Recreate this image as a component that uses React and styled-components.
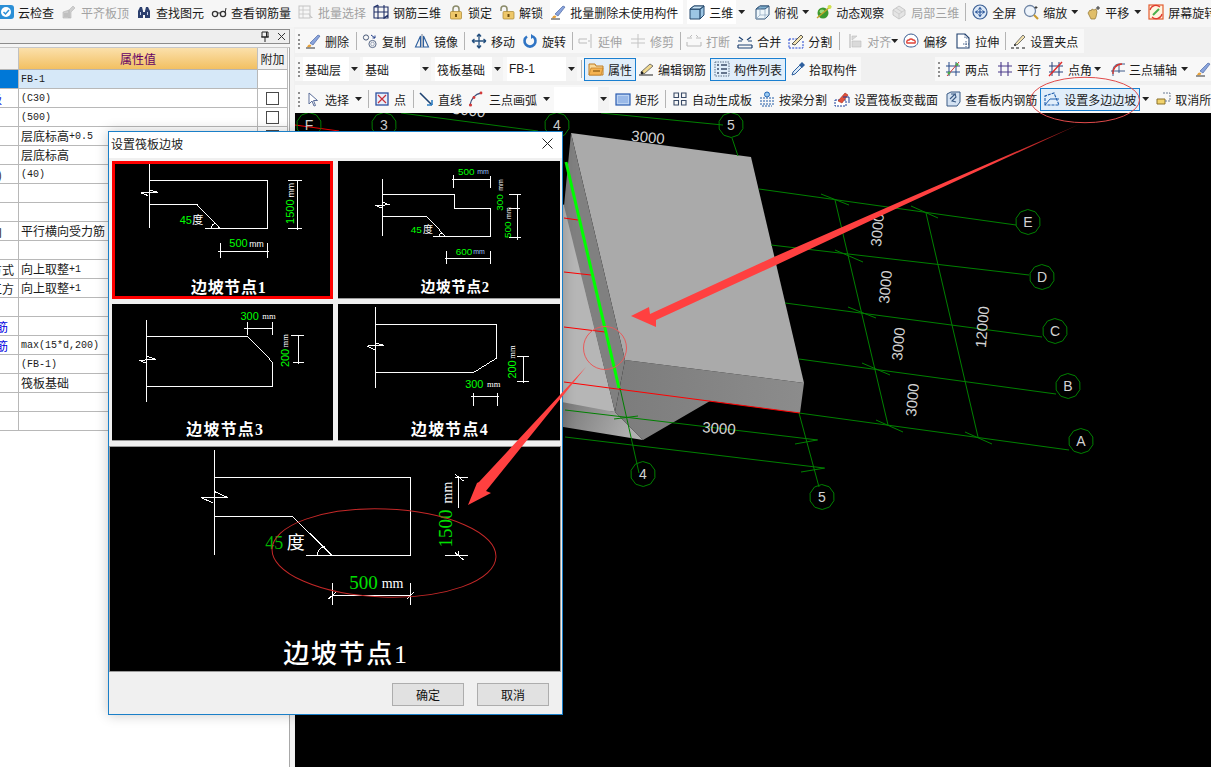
import React from "react";
import styled, { createGlobalStyle } from "styled-components";

const Global = createGlobalStyle`
  html, body { margin: 0; padding: 0; background: #f0f0f0; }
  #root { width: 1211px; height: 767px; overflow: hidden; }
`;
const CJK = `"Noto Sans CJK SC", "Liberation Sans", sans-serif`;
const Page = styled.div`
  position: relative; width: 1211px; height: 767px; overflow: hidden;
  display: flex; flex-direction: column; font-family: ${CJK}; font-size: 12px; color: #1a1a1a; background: #f0f0f0;
`;
const TopBar = styled.div`
  height: 27px; flex: none; display: flex; align-items: center; padding-bottom: 3px; box-sizing: border-box;
  background: #f6f6f6; overflow: hidden; white-space: nowrap;
`;
const Body = styled.div`flex: 1; display: flex; min-height: 0;`;
const Side = styled.div`width: 294px; flex: none; display: flex; flex-direction: column; padding-top: 2px; box-sizing: border-box; background: #f4f4f4;`;
const PanelTitle = styled.div`
  height: 15px; width: 290px; box-sizing: border-box; border: 1px solid #8c8c8c; border-left: 0; background: #eeeeee;
  display: flex; align-items: center; justify-content: flex-end; gap: 7px; padding-right: 3px; margin-bottom: 3px;
`;
const TableWrap = styled.div`flex: 1; width: 290px; box-sizing: border-box; background: #fff; border-right: 1px solid #a8a8a8; border-top: 1px solid #c8c8c8;`;
const Grid = styled.div`display: grid; grid-template-columns: 19px 239px 30px; grid-auto-rows: 19px; width: 288px;`;
const HeadA = styled.div`grid-row: auto; height: 22px; background: #f2f2f2; border-right: 1px solid #c0c0c0; border-bottom: 1px solid #b4b4b4; box-sizing: border-box;`;
const HeadB = styled(HeadA)`
  background: linear-gradient(#fbe0ab, #f2c062); color: #660066; font-size: 12px; display: flex; align-items: center; justify-content: center;
`;
const HeadC = styled(HeadA)`display: flex; align-items: center; justify-content: center; color: #222;`;
const Header = styled.div`display: grid; grid-template-columns: 19px 239px 30px; width: 288px; height: 22px;`;
const Cell = styled.div`
  box-sizing: border-box; border-right: 1px solid #b8b8b8; border-bottom: 1px solid #b8b8b8; display: flex; align-items: center;
  overflow: hidden; white-space: nowrap; background: ${p => p.$bg || "#fff"};
`;
const NameCell = styled(Cell)`justify-content: flex-end; padding-right: ${p => p.$pad}px; color: ${p => p.$blue ? "#0000e0" : "#1a1a1a"};`;
const ValueCell = styled(Cell)`padding-left: 2px; font-family: "Liberation Mono", ${CJK}; font-size: 10px;`;
const ValueCjk = styled.span`font-size: 12px;`;
const MarkCell = styled(Cell)`justify-content: center;`;
const Check = styled.div`width: 13px; height: 13px; box-sizing: border-box; border: 1px solid #4a4a4a; background: #fff;`;
const Right = styled.div`flex: 1; display: flex; flex-direction: column; min-width: 0; padding-top: 2px; margin-left: 1px;`;
const BarRow = styled.div`display: flex; justify-content: space-between; height: 24px; margin-bottom: 4px; flex: none;`;
const Bar = styled.div`
  height: 24px; display: flex; align-items: center; background: #f8f8f8; padding-right: ${p => p.$pr ?? 6}px; white-space: nowrap; overflow: hidden;
  width: ${p => p.$w ? p.$w + "px" : "auto"}; box-sizing: border-box;
`;
const WideBar = styled(Bar)`height: 28px; flex: none; margin-left: 0; width: 916px; padding: 0 0 0 0;`;
const Grip = styled.div`width: 0; height: 15px; margin-left: 3px; margin-right: 2px; border-left: 2px dotted #8e8e8e; flex: none;`;
const Sep = styled.div`width: 1px; height: 18px; background: #b4b4b4; margin-left: ${p => p.$ml}px; flex: none;`;
const ItemBox = styled.div`
  display: flex; align-items: center; flex: none; gap: ${p => p.$gap ?? 4}px; margin-left: ${p => p.$ml ?? 0}px;
  color: ${p => p.$off ? "#a2a2a2" : "#1a1a1a"};
  background: ${p => p.$white ? "#fff" : "transparent"};
  padding: ${p => p.$active ? "0 3px" : `0 ${p.$pr ?? 0}px 0 ${p.$pl ?? 0}px`};
  height: ${p => p.$active ? "23px" : p.$white ? "24px" : "auto"};
  box-sizing: border-box;
  border: ${p => p.$active ? "1px solid #1a7fd0" : "0"};
  ${p => p.$active && "background: #e1eefa;"}
`;
const IconSvg = styled.svg`width: 16px; height: 16px; flex: none; display: block;`;
const Caret = styled.div`
  width: 7px; height: 4px; flex: none; margin-left: ${p => p.$ml ?? 0}px;
  background: #222; clip-path: polygon(0 0, 100% 0, 50% 100%);
`;
const Select = styled.div`
  display: flex; width: ${p => p.$w}px; height: 24px; margin-left: ${p => p.$ml}px; flex: none; align-items: stretch;
`;
const SelectText = styled.div`flex: 1; background: #fff; display: flex; align-items: center; padding-left: 2px; font-family: ${p => p.$latin ? `"Liberation Sans", ${CJK}` : CJK};`;
const SelectBtn = styled.div`width: 11px; background: #f3f3f3; display: flex; align-items: center; justify-content: center;`;
const Canvas = styled.div`flex: 1; background: #000; min-height: 0; overflow: hidden;`;
const CanvasSvg = styled.svg`display: block; width: 917px; height: 654px;`;
const Overlay = styled.svg`position: absolute; left: 0; top: 0; width: 1211px; height: 767px; pointer-events: none; z-index: 5;`;
const Dialog = styled.div`
  position: absolute; left: 108px; top: 131px; width: 455px; height: 584px; box-sizing: border-box; z-index: 3;
  border: 1px solid #1a7fc8; background: #f0f0f0; box-shadow: 0 0 12px rgba(0,0,0,.22); display: flex; flex-direction: column;
`;
const DialogTitle = styled.div`height: 26px; flex: none; background: #fff; display: flex; align-items: center; justify-content: space-between; padding: 0 9px 3px 2px; box-sizing: border-box; color: #222;`;
const Thumbs = styled.div`display: grid; grid-template-columns: 221px 222px; grid-template-rows: 138px 137px; gap: 5px 5px; margin: 3px 0 5px 3px;`;
const Thumb = styled.div`background: #000; box-sizing: border-box; border: ${p => p.$sel ? "3px solid #ff0000" : "0"}; border-bottom: ${p => p.$sel ? "3px solid #ff0000" : "1px solid #999"}; overflow: hidden;`;
const DrawSvg = styled.svg`display: block; width: 100%; height: 100%;`;
const Large = styled.div`width: 452px; height: 226px; flex: none; background: #000; border: 1px solid #9a9a9a; box-sizing: border-box; margin-left: 0;`;
const Footer = styled.div`flex: 1; display: flex; justify-content: flex-end; gap: 13px; padding: 11px 13px 0 0; box-sizing: border-box;`;
const Btn = styled.div`width: 72px; height: 23px; box-sizing: border-box; border: 1px solid #adadad; background: #e1e1e1; display: flex; align-items: center; justify-content: center; color: #111;`;
const Line = styled.path`fill: none; stroke: #fff; stroke-width: 3; shape-rendering: crispEdges;`;
const Num = styled.text`fill: ${p => p.$c || "#00ff00"}; font-family: ${p => p.$serif ? '"Liberation Serif"' : '"Liberation Sans"'}, ${CJK}; font-size: ${p => p.$s || 33}px;`;
const Title = styled.text`fill: #fff; font-family: "Liberation Serif", ${CJK}; font-weight: ${p => p.$w ?? 700}; font-size: ${p => p.$s || 48}px; letter-spacing: ${p => p.$ls ?? 2}px;`;
const Axis = styled.path`fill: none; stroke: #008000; stroke-width: 1;`;
const RedAxis = styled.path`fill: none; stroke: #ff0000; stroke-width: 1;`;
const DimText = styled.text`fill: #d2d2d2; font-family: "Liberation Sans", sans-serif; font-size: 15px;`;
const BubbleText = styled.text`fill: #d2d2d2; font-family: "Liberation Sans", sans-serif; font-size: 14px; text-anchor: middle; dominant-baseline: central;`;
const BubbleShape = styled.polygon`fill: none; stroke: #008000; stroke-width: 1;`;

const st = (c, w = 1.3) => ({ fill: "none", stroke: c, strokeWidth: w });
const brush = <><path d="M2 14c1-3 3-3 4-2s-1 3-4 2z" fill="#e8a33c"/><path d="M5 10l8-8 2 1-7 9z" fill="#8aa4dc" stroke="#3c5a9a" strokeWidth=".6"/><path d="M1 15h9" {...st("#333",1)}/></>;
const I = {
  cloud: <><rect y="1" width="16" height="14" rx="3" fill="#2b8fd6"/><circle cx="8" cy="8" r="5" fill="#fff"/><path d="M5.5 8l2 2 3.5-4" {...st("#2b8fd6",1.5)}/></>,
  flush: <><path d="M2 14V8l6-2v8zM8 14V6l4-4 2 2-4 4v6z" fill="#cfcfcf" stroke="#b5b5b5" strokeWidth=".6"/><path d="M3 10h4M3 12h4" {...st("#aaa",.8)}/></>,
  binoc: <><path d="M2 14V7l2-4h2l1 4v7zM9 14V7l1-4h2l2 4v7z" fill="#2c3f6e"/><path d="M7 8h2v3H7z" fill="#2c3f6e"/><path d="M4 8h1v3H4zM11 8h1v3h-1z" fill="#c7d3ee"/></>,
  glasses: <><circle cx="4" cy="10" r="2.6" {...st("#333",1.3)}/><circle cx="12" cy="10" r="2.6" {...st("#333",1.3)}/><path d="M6 9h4M14 9l1-5" {...st("#333",1)}/></>,
  batch: <><rect x="1" y="2" width="11" height="12" {...st("#c4c4c4",1)}/><path d="M1 6h11M1 10h11M5 2v12" {...st("#c4c4c4",.8)}/><path d="M10 9l5 5-2 0z" fill="#c4c4c4"/></>,
  rebar: <><path d="M1 3h14v11H1zM5 1v14M11 1v14M1 8h14M1 3l4-2M11 14l4-3" {...st("#1f2f66",1.1)}/></>,
  lock: <><path d="M5 8V5a3 3 0 016 0v3" {...st("#8b8b6a",1.5)}/><rect x="2.5" y="7.5" width="11" height="7.5" rx="1" fill="#eec769" stroke="#a8842e" strokeWidth=".7"/><rect x="7" y="10" width="2" height="3" fill="#6b4d10"/></>,
  unlock: <><path d="M2 7V5a3 3 0 016 0v3" {...st("#8b8b6a",1.5)}/><rect x="4" y="7.5" width="11" height="7.5" rx="1" fill="#eec769" stroke="#a8842e" strokeWidth=".7"/><rect x="8.5" y="10" width="2" height="3" fill="#6b4d10"/></>,
  brush,
  cube: <><path d="M1 5l4-3h10v9l-4 4H1z" fill="#9cc6e4" stroke="#264a6e"/><path d="M1 5h10v10M11 5l4-3" {...st("#264a6e")}/><path d="M1 5l4-3h10l-4 3z" fill="#c9e3f4" stroke="#264a6e"/></>,
  top: <><path d="M2 5l4-3h9v9l-4 4H2z" fill="#eef6fb" stroke="#35577a"/><path d="M2 5l4-3h9l-4 3z" fill="#7fb0d0" stroke="#35577a"/><path d="M11 5v10M2 15l4-4h9M6 2v9" {...st("#8aa5bd",.7)}/></>,
  orbit: <><circle cx="7" cy="9" r="5.5" fill="#3d9a2e"/><ellipse cx="6" cy="7.5" rx="2.5" ry="2" fill="#9bdc7d"/><path d="M1 14L15 2" {...st("#c2a32a",1.4)}/><circle cx="13.5" cy="3" r="2" fill="#cfe34a"/></>,
  local: <><path d="M2 6l6-4 6 4v5l-6 4-6-4z" fill="#e4e4e4" stroke="#c8c8c8"/><path d="M2 6l6 4 6-4M8 10v5M5 4l6 4" {...st("#c8c8c8",.8)}/></>,
  full: <><circle cx="8" cy="8" r="7" fill="#dce8f6" stroke="#3c5f94" strokeWidth="1.2"/><path d="M8 3.5v9M3.5 8h9M8 3.5l-1.5 2M8 3.5l1.5 2M8 12.5l-1.5-2M8 12.5l1.5-2M3.5 8l2-1.5M3.5 8l2 1.5M12.5 8l-2-1.5M12.5 8l-2 1.5" {...st("#1d4a92",1)}/></>,
  zoom: <><circle cx="7" cy="7" r="5.5" fill="#eef4fb" stroke="#6f85a4" strokeWidth="1.3"/><path d="M11 11l4 4" {...st("#c99a2e",2.2)}/><path d="M13 2v3M11.5 3.5h3" {...st("#333",.9)}/></>,
  pan: <><path d="M3 9l2-3 1 1 1-2 2 1 2-1 1 3-1 5-1 2H6z" fill="#e0be6a" stroke="#8e7330" strokeWidth=".7"/><path d="M11 4h4M13 2v4" {...st("#333",1)}/></>,
  screen: <><rect x="1" y="1" width="14" height="14" fill="#fff5e0" stroke="#e25a2e" strokeWidth="1.2"/><path d="M5 11l6-6" {...st("#49b04a",2)}/><path d="M2 6a6 6 0 0110-3M14 10a6 6 0 01-10 3" {...st("#e03a2e",1.2)}/></>,
  copy: <><circle cx="4" cy="4.5" r="2.6" {...st("#4a5a78",1)}/><circle cx="10.5" cy="11" r="3.6" {...st("#5a6a88",1)}/><circle cx="10.5" cy="11" r="1.8" {...st("#8a97ad",.8)}/><path d="M9 2l4 3M13 5V2.5M13 5h-2.5" {...st("#24408a",1)}/></>,
  mirror: <><path d="M8 1v14" {...st("#4a5a78",.8)}/><path d="M6.5 3L1.5 14h5zM9.5 3l5 11h-5z" {...st("#2d5f9e",1.1)}/></>,
  move: <><path d="M8 1v14M1 8h14M8 1L6 3.5M8 1l2 2.5M8 15l-2-2.5M8 15l2-2.5M1 8l2.5-2M1 8l2.5 2M15 8l-2.5-2M15 8l-2.5 2" {...st("#25507f",1.3)}/></>,
  rot: <><path d="M5 3.5a5.5 5.5 0 106 0" {...st("#2f74c4",2.6)}/><path d="M9 1l3.5 2.5L9 6z" fill="#2f74c4"/></>,
  extend: <><path d="M1 6h8M1 10h8M1 6v4M13 1v14M10 8h2" {...st("#bcbcbc",1)}/></>,
  trim: <><path d="M1 6h14M1 10h14M8 1v14" {...st("#c4c4c4",1)}/></>,
  brk: <><path d="M1 5h5M10 5h5M1 13h14M1 13V9M15 13V9" {...st("#bcbcbc",1.1)}/><path d="M6 2l-2 2M10 2l2 2" {...st("#bcbcbc",1)}/></>,
  merge: <><path d="M1 12h14M1 15h14M1 12v3M15 12v3M2 4l4 3M14 4l-4 3" {...st("#1e4272",1.2)}/><path d="M1 8h4M11 8h4" {...st("#1e4272",1.2)}/></>,
  split: <><path d="M1 6h11M1 15h14M1 6v9M15 8v7" {...st("#1a3fd0",1)} strokeDasharray="2 1.2"/><path d="M4 11l9-9 2 2-8 8z" fill="#f4e3b0" stroke="#333" strokeWidth=".8"/></>,
  align: <><path d="M3 1v14" {...st("#bdbdbd",1.2)}/><path d="M5 3h5l-5 4zM5 8h9v6H5z" fill="#dadada" stroke="#bdbdbd" strokeWidth=".6"/></>,
  offset: <><path d="M1 8a7 7 0 0114 0c0 4-3 6-7 6s-7-2-7-6z" fill="#fff" stroke="#3a5d92"/><path d="M4 10a2 2 0 012-3 2.5 2.5 0 014 0 2 2 0 012 3z" {...st("#e0443a",1.4)}/></>,
  stretch: <><path d="M2 1h8l4 4v10H2z" fill="#fff" stroke="#20406e" strokeWidth="1.1"/><path d="M10 1v4h4M11 8v6M8 11h6" {...st("#20406e",.8)} strokeDasharray="1.5 1"/></>,
  grip: <><path d="M1 15h3M6 15h3M12 15h3" {...st("#111",1.2)}/><circle cx="5" cy="12" r="1" fill="#111"/><path d="M5 11L13 2l2 2-8 8z" fill="#f4e3b0" stroke="#555" strokeWidth=".8"/></>,
  props: <><path d="M1 3h6l1 2h7v9H1z" fill="#f9d99a" stroke="#c07d22"/><path d="M3 7h12l-2 7H1z" fill="#f5b352" stroke="#c07d22" strokeWidth=".7"/><path d="M5 10h7" {...st("#8a5a10",1.2)}/></>,
  edit: <><path d="M1 14h14" {...st("#333",1.1)}/><path d="M3 11L12 3l3 2-9 8z" fill="#f1d98f" stroke="#555" strokeWidth=".8"/><circle cx="4" cy="12" r="1.4" fill="#222"/></>,
  list: <><rect x="1" y="1" width="14" height="14" {...st("#5f7088",1)} strokeDasharray="1.5 1"/><path d="M3 4h2M3 8h2M3 12h2M7 4h6M7 8h6M7 12h6" {...st("#3c4e6a",1.3)}/></>,
  picker: <><path d="M2 14l1-3 7-7 2 2-7 7z" fill="#dbeaf8" stroke="#2d5f9e"/><path d="M9 4l3-3 3 3-3 3z" fill="#2d5f9e"/></>,
  twop: <><path d="M4 1v14M11 1v14M1 5h14M1 11h14" {...st("#274a8a",1)}/><path d="M2 15L14 1" {...st("#d23a3a",1)}/><circle cx="4" cy="12" r="1.5" fill="#4aa84a"/><circle cx="12" cy="3.5" r="1.5" fill="#4aa84a"/></>,
  para: <><path d="M4 1v14M11 1v14M1 5h14M1 11h14" {...st("#4a3a8a",1.1)}/></>,
  ang: <><path d="M4 1v14M11 1v14M1 5h14M1 11h14" {...st("#27407a",1)}/><path d="M1 15L14 1" {...st("#e02a2a",1.4)}/></>,
  arc3: <><path d="M3 15V9a6 6 0 016-6h6M1 10h14M9 3v9" {...st("#2a4a80",.9)}/><path d="M3 13a9 9 0 019-10" {...st("#d8322a",1.3)}/></>,
  cur: <><path d="M5 2v11l3-3 2 5 1.5-.5-2-5h4z" fill="#fff" stroke="#5c6f9a" strokeWidth="1"/></>,
  pt: <><rect x="2" y="2" width="12" height="12" fill="#e8f0fb" stroke="#2d4f9e" strokeWidth="1.3"/><path d="M4 4l8 8M12 4l-8 8" {...st("#c8303a",1.2)}/></>,
  ln: <><path d="M2 2l12 12" {...st("#1e4272",1.6)}/><path d="M14 14V9M14 14H9" {...st("#2e7fc4",1.6)}/></>,
  arc: <><path d="M2 14C3 8 7 3 13 2" {...st("#3a4f7a",1.3)}/><circle cx="2.5" cy="14" r="1.6" fill="#d23a3a"/><circle cx="6" cy="6.5" r="1.4" fill="#d23a3a"/><circle cx="13" cy="2" r="1.4" fill="#d23a3a"/></>,
  rect: <><rect x="1" y="3" width="14" height="11" fill="#bcd3f2" stroke="#2b5cb0" strokeWidth="1.2"/><rect x="3" y="5" width="10" height="7" fill="#9ab9e8"/></>,
  auto: <><path d="M2 2h4.500v4.500H2zM9.500 2H14v4.500H9.500zM2 9.500h4.500V14H2zM9.500 9.500H14V14H9.500z" {...st("#3a4a66",1.1)}/></>,
  beam: <><circle cx="8" cy="3.500" r="2.500" fill="#9ccaf0" stroke="#2468b8"/><path d="M1 7h14M1 10h14M1 13h14M3 15h10" {...st("#1f5aa6",1.1)} strokeDasharray="2 1"/></>,
  sect: <><path d="M1 9h11v6H1z" fill="#fff" stroke="#1a3f9a" strokeDasharray="2 1"/><path d="M4 10l7-8 3 2-6 8z" fill="#e2503a" stroke="#a82a1a" strokeWidth=".6"/><path d="M9 6h6v6" {...st("#1a3f9a",1)}/></>,
  view: <><path d="M2 3l4-2h9v10l-3 4H2z" fill="#d4e2f2" stroke="#3a5a84"/><path d="M5 8l5-5 1 3-4 4 4 1M6 3h5" {...st("#3a5a84",1.1)}/></>,
  poly: <><path d="M1 14V5l9-3 5 12z" {...st("#1f5fae",1.1)} strokeDasharray="3 1"/><path d="M1 14l5-6h9" {...st("#1f5fae",1)}/></>,
  cancel: <><path d="M2 8h8v5H2z" fill="#f2d36c" stroke="#8a702a"/><path d="M8 2h7v8h-5" {...st("#6a7a92",1)} strokeDasharray="2 1"/></>,
};
const Icon = ({ k }) => <IconSvg viewBox="0 0 16 16">{I[k]}</IconSvg>;
const Item = ({ k, t, off, ml, gap, white, pl, pr, active }) => (
  <ItemBox $off={off} $ml={ml} $gap={gap} $white={white} $pl={pl} $pr={pr} $active={active}>
    {k && <Icon k={k} />}{t && <span>{t}</span>}
  </ItemBox>
);

const row1 = [
  { k: "cloud", t: "云检查", ml: -2 }, { k: "flush", t: "平齐板顶", off: 1, ml: 7 }, { k: "binoc", t: "查找图元", ml: 7 },
  { k: "glasses", t: "查看钢筋量", ml: 7 }, { k: "batch", t: "批量选择", off: 1, ml: 7 }, { k: "rebar", t: "钢筋三维", ml: 7 },
  { k: "lock", t: "锁定", ml: 7 }, { k: "unlock", t: "解锁", ml: 7 }, { k: "brush", t: "批量删除未使用构件", ml: 7, white: 1, pr: 5 },
  { k: "cube", t: "三维", ml: 4, white: 1, pl: 2, pr: 3 }, { caret: 2 }, { k: "top", t: "俯视", ml: 9 }, { caret: 4 },
  { k: "orbit", t: "动态观察", ml: 7 }, { k: "local", t: "局部三维", off: 1, ml: 7 }, { sep: 6 }, { k: "full", t: "全屏", ml: 6 },
  { k: "zoom", t: "缩放", ml: 7 }, { caret: 4 }, { k: "pan", t: "平移", ml: 7 }, { caret: 5 }, { k: "screen", t: "屏幕旋转", ml: 7 },
];
const row2 = [
  { k: "brush", t: "删除", ml: 3 }, { sep: 7 }, { k: "copy", t: "复制", ml: 5 }, { k: "mirror", t: "镜像", ml: 8 }, { sep: 6 },
  { k: "move", t: "移动", ml: 6 }, { k: "rot", t: "旋转", ml: 7 }, { sep: 6 }, { k: "extend", t: "延伸", off: 1, ml: 5 },
  { k: "trim", t: "修剪", off: 1, ml: 8 }, { sep: 6 }, { k: "brk", t: "打断", off: 1, ml: 5 }, { k: "merge", t: "合并", ml: 7 },
  { k: "split", t: "分割", ml: 7 }, { sep: 7 }, { k: "align", t: "对齐", off: 1, ml: 7 }, { caret: 0 }, { k: "offset", t: "偏移", ml: 5 },
  { k: "stretch", t: "拉伸", ml: 8 }, { sep: 6 }, { k: "grip", t: "设置夹点", ml: 4 },
];
const row3a = [
  { sep: 4 }, { k: "props", t: "属性", ml: 2, active: 1 }, { k: "edit", t: "编辑钢筋", ml: 2 }, { k: "list", t: "构件列表", ml: 4, active: 1 },
  { k: "picker", t: "拾取构件", ml: 4, gap: 3 },
];
const row3b = [
  { k: "twop", t: "两点", ml: 3 }, { k: "para", t: "平行", ml: 8 }, { k: "ang", t: "点角", ml: 7 }, { caret: 2 },
  { k: "arc3", t: "三点辅轴", ml: 9, gap: 3 }, { caret: 4 }, { k: "brush", ml: 7 },
];
const row4a = [
  { k: "cur", t: "选择", ml: 2, gap: 5 }, { caret: 6 }, { sep: 6 }, { k: "pt", t: "点", ml: 5 }, { sep: 7 }, { k: "ln", t: "直线", ml: 4 },
  { k: "arc", t: "三点画弧", ml: 6, gap: 5 }, { caret: 6 },
];
const row4b = [
  { k: "rect", t: "矩形", ml: 6 }, { sep: 6 }, { k: "auto", t: "自动生成板", ml: 6 }, { k: "beam", t: "按梁分割", ml: 7 },
  { k: "sect", t: "设置筏板变截面", ml: 7 }, { k: "view", t: "查看板内钢筋", ml: 7 }, { k: "poly", t: "设置多边边坡", ml: 3, active: 1 },
  { caret: 2 }, { k: "cancel", t: "取消所选多边边坡", ml: 6 },
];
const Items = ({ list }) => list.map((d, i) =>
  d.sep !== undefined ? <Sep key={i} $ml={d.sep} /> :
  d.caret !== undefined ? <Caret key={i} $ml={d.caret} /> : <Item key={i} {...d} />);

const Sel = ({ w, ml, t, latin }) => (
  <Select $w={w} $ml={ml}><SelectText $latin={latin}>{t}</SelectText><SelectBtn><Caret /></SelectBtn></Select>
);

const rows = [
  { v: "FB-1", sel: 1 }, { v: "(C30)", c: 1, n: "强度等级", p: 16, blue: 1 }, { v: "(500)", c: 1 }, { v: "层底标高", x: "+0.5", c: 1 }, { v: "层底标高" },
  { v: "(40)", n: "(mm)", p: 16 }, {}, {}, { v: "平行横向受力筋", n: "方向", p: 16 }, {}, { v: "向上取整", x: "+1", n: "方式", p: 4 }, { v: "向上取整", x: "+1", n: "工方", p: 4 },
  {}, { n: "钢筋", p: 10, blue: 1 }, { v: "max(15*d,200)", n: "钢筋", p: 10, blue: 1 }, { v: "(FB-1)" }, { v: "筏板基础" }, {}, {},
];
const hasCjk = s => /[\u4e00-\u9fff]/.test(s);

const poly10 = (cx, cy, r) => Array.from({ length: 10 }, (_, i) => {
  const a = (i / 10) * Math.PI * 2 + 0.3;
  return `${(cx + r * Math.cos(a)).toFixed(1)},${(cy + r * Math.sin(a)).toFixed(1)}`;
}).join(" ");
const Bubble = ({ x, y, t }) => <g><BubbleShape points={poly10(x, y, 12.5)} /><BubbleText x={x} y={y}>{t}</BubbleText></g>;
const bubbles = [["F", 308, 125], ["3", 383, 125], ["4", 556, 125], ["5", 730, 125], ["E", 1027, 222], ["D", 1041, 277], ["C", 1054, 331], ["B", 1067, 386], ["A", 1080, 441], ["4", 642, 474], ["5", 821, 497]];
const axes = "M400 113L537 131M600 113L722 125M731 138L737 156M758 189L1015 225M770 245L1028 275M784 303L1041 337M798 359L1055 394M798 413L1068 450M564 410L817 440M564 437L823 468M619 388L638 473M798 413L818 487M834 200L887 425M925 213L977 437M820 194L848 205M910 206L937 218M834 250L862 262M847 307L875 318M861 363L889 375M875 420L902 432M964 432L991 444M794 444L816 440M800 472L824 468M613 419L637 416";
const reds = "M294 125L338 131M563 218L577 220M563 272L590 275M563 327L604 332M563 382L799 413";

const Dim = ({ x, y, r, children }) => <DimText transform={`translate(${x} ${y}) rotate(${r})`} textAnchor="middle" dominantBaseline="central">{children}</DimText>;
const VText = ({ x, y, s, c, serif, children }) => <Num $s={s} $c={c} $serif={serif} transform={`translate(${x} ${y}) rotate(-90)`} textAnchor="middle">{children}</Num>;

const Node1 = () => (
  <DrawSvg viewBox="30 117 645 396">
    <Line d="M133 118V308M133 166H488V310H300M133 238H275L345 310M133 195L158 202L108 204L130 212M318 310Q322 296 332 296M550 165H590M550 310H590M578 165V315M347 355V398M488 355V398M340 378H492" />
    <Num x="224" y="298">45</Num><Num x="262" y="298" $c="#fff">度</Num>
    <Num x="373" y="366">500</Num><Num x="433" y="366" $c="#fff" $s={26}>mm</Num>
    <VText x="567" y="260">1500</VText><VText x="566" y="196" c="#fff" s={26}>mm</VText>
    <Title x="258" y="505">边坡节点1</Title>
  </DrawSvg>
);
const Node2 = () => (
  <DrawSvg viewBox="698 108 664 413">
    <Line d="M829 162V335M829 208H1046V250H1154V337H982M829 274H960L1022 337M829 232L851 240L807 242L829 250M998 337Q1002 325 1010 324M1045 150V188M1155 152V188M1038 165H1158M1210 208H1248M1210 250H1245M1210 340H1248M1236 208V345M1023 380V418M1155 380V418M1018 403H1158" />
    <Num x="1057" y="150" $s={30}>500</Num><Num x="1115" y="147" $c="#9cc4ff" $s={21}>mm</Num>
    <Num x="1050" y="392" $s={30}>600</Num><Num x="1103" y="389" $c="#9cc4ff" $s={21}>mm</Num>
    <Num x="915" y="326" $s={30}>45</Num><Num x="952" y="326" $c="#fff" $s={30}>度</Num>
    <VText x="1192" y="233" s={30}>300</VText><VText x="1192" y="180" c="#fff" s={21}>mm</VText>
    <VText x="1217" y="315" s={30}>500</VText><VText x="1217" y="265" c="#fff" s={21}>mm</VText>
    <Title x="945" y="504" $s={44}>边坡节点2</Title>
  </DrawSvg>
);
const Node3 = () => (
  <DrawSvg viewBox="21 537 663 411">
    <Line d="M124 585V833M124 634H428L503 712V787H124M124 695L152 705L100 707L124 717M428 592V632M503 592V632M418 610H506M558 633H600M565 714H600M581 633V718" />
    <Num x="407" y="584">300</Num><Num x="473" y="582" $c="#fff" $s={26} $serif>mm</Num>
    <VText x="553" y="700">200</VText><VText x="551" y="648" c="#fff" s={26} serif>mm</VText>
    <Title x="243" y="932" $s={48} $ls={4}>边坡节点3</Title>
  </DrawSvg>
);
const Node4 = () => (
  <DrawSvg viewBox="698 537 664 411">
    <Line d="M808 546V792M808 598H1175V700L1103 745H808M808 655L833 662L783 664L808 676M1237 697H1272M1237 772H1272M1255 697V776M1103 805V845M1178 805V845M1095 817H1182" />
    <Num x="1079" y="790">300</Num><Num x="1145" y="788" $c="#fff" $s={26} $serif>mm</Num>
    <VText x="1231" y="735">200</VText><VText x="1228" y="682" c="#fff" s={26} serif>mm</VText>
    <Title x="915" y="932" $s={48} $ls={4}>边坡节点4</Title>
  </DrawSvg>
);
const NodeLarge = () => (
  <DrawSvg viewBox="15 25 1350 669">
    <Line d="M328 33V348M328 115H917V349H603M328 232H563L681 349M328 157L368 175L288 175L325 192M636 349Q640 325 660 322M1050 115H1088M1060 115V205M1060 335V349M1020 350H1088M1050 105L1075 125M1050 340L1075 362M682 430V497M916 430V497M682 468H916M670 480L694 458M905 480L928 458" />
    <Num x="481" y="330" $s={54} $c="#00b800" $serif>45</Num><Num x="545" y="330" $s={54} $c="#fff" $serif>度</Num>
    <Num x="733" y="450" $s={57} $serif $c="#00e000">500</Num><Num x="830" y="447" $s={42} $c="#fff" $serif>mm</Num>
    <VText x="1042" y="268" s={57} c="#00e000" serif>1500</VText><VText x="1042" y="160" s={42} c="#fff" serif>mm</VText>
    <Title x="535" y="672" $s={78} $ls={5} $w={500}>边坡节点1</Title>
  </DrawSvg>
);

export default function App() {
  return (
    <Page>
      <Global />
      <TopBar><Items list={row1} /></TopBar>
      <Body>
        <Side>
          <PanelTitle>
            <svg width="10" height="11" viewBox="0 0 10 11"><path d="M2 1h6v5H2zM1 6h8M5 6v5M6.500 1v5" fill="none" stroke="#222" /></svg>
            <svg width="9" height="9" viewBox="0 0 9 9"><path d="M1 1l7 7M8 1L1 8" stroke="#333" fill="none" /></svg>
          </PanelTitle>
          <TableWrap>
            <Header><HeadA /><HeadB>属性值</HeadB><HeadC>附加</HeadC></Header>
            <Grid>
              {rows.map((r, i) => (
                <React.Fragment key={i}>
                  <NameCell $pad={r.p ?? 0} $blue={r.blue} $bg={r.sel ? "#0078d7" : undefined}>{r.n}</NameCell>
                  <ValueCell $bg={r.sel ? "#d6e8f8" : undefined}>
                    {r.v && (hasCjk(r.v) ? <ValueCjk>{r.v}</ValueCjk> : r.v)}{r.x}
                  </ValueCell>
                  <MarkCell>{r.c && <Check />}</MarkCell>
                </React.Fragment>
              ))}
            </Grid>
          </TableWrap>
        </Side>
        <Right>
          <BarRow><Bar><Grip /><Items list={row2} /></Bar></BarRow>
          <BarRow>
            <Bar $pr={4}>
              <Grip /><Sel w={57} ml={1} t="基础层" /><Sel w={68} ml={3} t="基础" /><Sel w={68} ml={4} t="筏板基础" /><Sel w={70} ml={4} t="FB-1" latin />
              <Items list={row3a} />
            </Bar>
            <Bar $w={276} $pr={0}><Grip /><Items list={row3b} /></Bar>
          </BarRow>
          <WideBar>
            <Grip /><Items list={row4a} /><Sel w={55} ml={4} t="" /><Items list={row4b} />
          </WideBar>
          <Canvas>
            <CanvasSvg viewBox="294 113 917 654">
              <defs>
                <linearGradient id="lowL" x1="0" x2="1" y1="0" y2="0.2"><stop offset="0" stopColor="#707070" /><stop offset="1" stopColor="#b0b0b0" /></linearGradient>
                <linearGradient id="front" x1="0" x2="1" y1="0" y2="0"><stop offset="0" stopColor="#7c7c7c" /><stop offset="1" stopColor="#8c8c8c" /></linearGradient>
              </defs>
              <polygon points="500,190 564,205 614,412 500,400" fill="#b6b6b6" />
              <polygon points="550,400 614,412 642,440 550,425" fill="url(#lowL)" />
              <polygon points="624,360 803,383 799,413 709,401 642,440 614,412" fill="url(#front)" />
              <polygon points="570,133 750,157 803,383 624,360" fill="#aaaaaa" />
              <polygon points="570,133 624,360 614,412 563,206" fill="#808080" />
              <Axis d={axes} />
              <RedAxis d={reds} />
              <path d="M565 162L618 388" stroke="#00ff00" strokeWidth="3" fill="none" />
              {bubbles.map(([t, x, y], i) => <Bubble key={i} t={t} x={x} y={y} />)}
              <Dim x={468} y={110} r={7}>3000</Dim>
              <Dim x={647} y={137} r={6}>3000</Dim>
              <Dim x={876} y={230} r={-85}>3000</Dim>
              <Dim x={884} y={287} r={-85}>3000</Dim>
              <Dim x={897} y={344} r={-85}>3000</Dim>
              <Dim x={911} y={400} r={-85}>3000</Dim>
              <Dim x={981} y={327} r={-85}>12000</Dim>
              <Dim x={718} y={428} r={4}>3000</Dim>
            </CanvasSvg>
          </Canvas>
        </Right>
      </Body>

      <Dialog>
        <DialogTitle>
          <span>设置筏板边坡</span>
          <svg width="11" height="11" viewBox="0 0 11 11"><path d="M.5.500l10 10M10.500.500l-10 10" stroke="#222" fill="none" /></svg>
        </DialogTitle>
        <Thumbs>
          <Thumb $sel><Node1 /></Thumb>
          <Thumb><Node2 /></Thumb>
          <Thumb><Node3 /></Thumb>
          <Thumb><Node4 /></Thumb>
        </Thumbs>
        <Large><NodeLarge /></Large>
        <Footer><Btn>确定</Btn><Btn>取消</Btn></Footer>
      </Dialog>

      <Overlay viewBox="0 0 1211 767">
        <defs>
          <linearGradient id="arrowA" gradientUnits="userSpaceOnUse" x1="631" y1="316" x2="1080" y2="124">
            <stop offset="0" stopColor="#ff4040" /><stop offset=".8" stopColor="#ff4040" /><stop offset="1" stopColor="#7a1010" />
          </linearGradient>
        </defs>
        <ellipse cx="1085" cy="100" rx="54.500" ry="22.700" fill="none" stroke="#e04a4a" />
        <polygon points="1080,124 904,200 775,256.500 650,314 649,307 631,316 656,327 656,320 775,265.500 904,205" fill="url(#arrowA)" />
        <circle cx="605" cy="348" r="21.500" fill="none" stroke="#e85a5a" />
        <polygon points="586,367 479,482 477,483 468,505 491,493 486,491" fill="#ff4040" />
        <ellipse cx="384" cy="553" rx="112" ry="44" fill="none" stroke="#c42828" transform="rotate(2 384 553)" />
      </Overlay>
    </Page>
  );
}
